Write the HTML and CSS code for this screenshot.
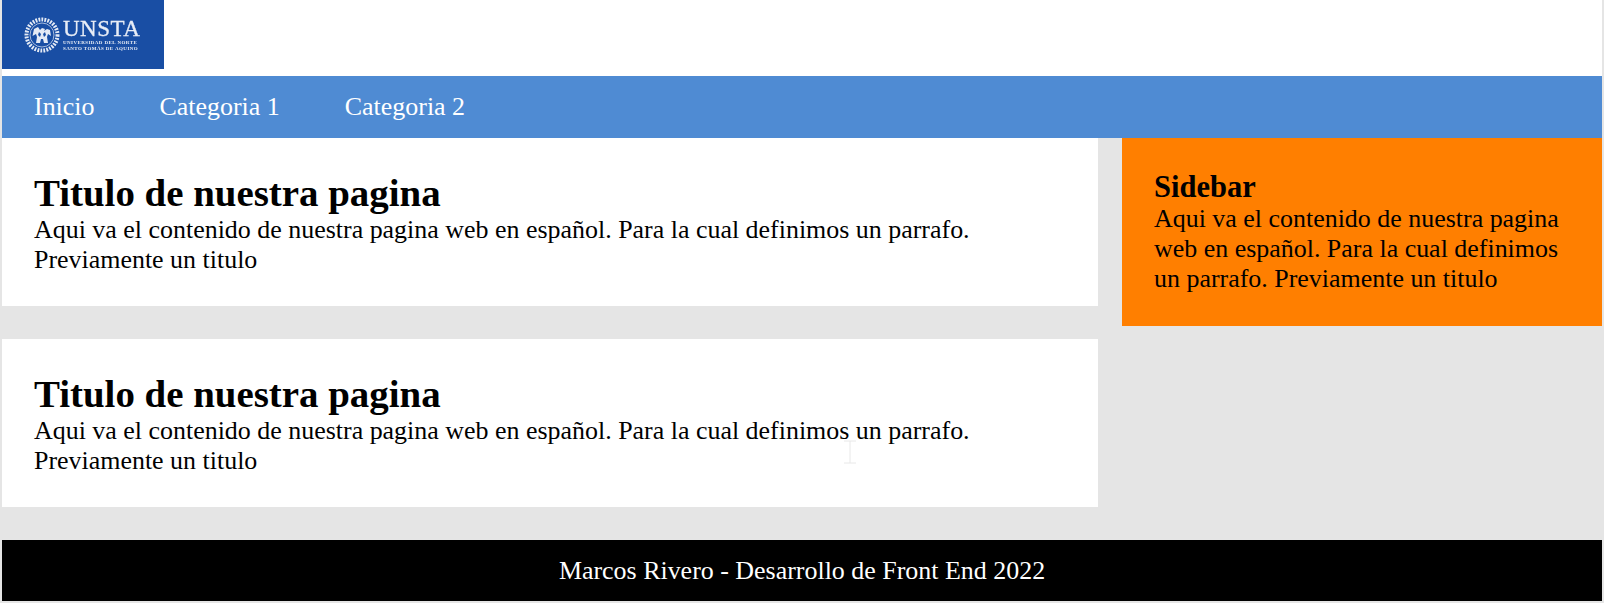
FILE: index.html
```html
<!DOCTYPE html>
<html lang="en">
<head>
    <meta charset="UTF-8">
    <title>UNSTA</title>
    <link rel="stylesheet" href="styles.css">
</head>
<body>

<header class="top">
    <div class="logo">
        <svg class="seal" width="36" height="36" viewBox="0 0 36 36">
            <circle cx="18" cy="18" r="15.5" fill="none" stroke="#e4eaf5" stroke-width="4" stroke-dasharray="1.8 1.2"/>
            <circle cx="18" cy="18" r="12" fill="none" stroke="#e4eaf5" stroke-width="0.7"/>
            <path d="M8.5 19 L10 12 L14 10 L16 13 L18 11 L21 12 L20 14 L23 12 L26 13 L27 19 L24 17 L23 20 L24 26 L20 26 L19 22 L17 22 L16 26 L12 26 L13 20 L12 17 Z" fill="#e4eaf5"/>
            <path d="M15 15 L17 17 L16 20 L14 18 Z M21 15 L19 17 L20 20 L22 18 Z" fill="#194ea4"/>
        </svg>
        <div class="logo-text">
            <div class="logo-name">UNSTA</div>
            <div class="logo-sub">UNIVERSIDAD DEL NORTE</div>
            <div class="logo-sub">SANTO TOMÁS DE AQUINO</div>
        </div>
    </div>
</header>

<nav class="menu">
    <a href="#">Inicio</a>
    <a href="#">Categoria 1</a>
    <a href="#">Categoria 2</a>
</nav>

<div class="layout">
    <main class="content">
        <section class="card">
            <h1>Titulo de nuestra pagina</h1>
            <p>Aqui va el contenido de nuestra pagina web en español. Para la cual definimos un parrafo. Previamente un titulo</p>
        </section>
        <section class="card">
            <h1>Titulo de nuestra pagina</h1>
            <p>Aqui va el contenido de nuestra pagina web en español. Para la cual definimos un parrafo. Previamente un titulo</p>
        </section>
    </main>
    <aside class="sidebar">
        <h2>Sidebar</h2>
        <p>Aqui va el contenido de nuestra pagina web en español. Para la cual definimos un parrafo. Previamente un titulo</p>
    </aside>
</div>

<footer class="foot">Marcos Rivero - Desarrollo de Front End 2022</footer>

<!-- text cursor caught in the capture -->
<svg class="cursor" width="14" height="24" viewBox="0 0 14 24">
    <path d="M1 1H13M7 1V23M1 23H13" fill="none" stroke="#e8e8e8" stroke-width="1"/>
</svg>

</body>
</html>
```

FILE: styles.css
```css
body {
    font-family: "Liberation Serif", serif;
    font-size: 25.94px;
    margin: 0 2px 2px;
    background-color: #e5e5e5;
    color: #000;
}
.top {
    background-color: #fff;
    height: 76px;
}
.logo {
    width: 162px;
    height: 69px;
    background-color: #194ea4;
    display: flex;
    align-items: center;
    padding-left: 22px;
    box-sizing: border-box;
    gap: 3px;
    color: #e8edf6;
}
.seal, .logo-text {
    filter: blur(0.4px);
}
.logo-name {
    font-size: 23px;
    line-height: 21px;
    -webkit-text-stroke: 0.3px #e8edf6;
    letter-spacing: 0.5px;
    margin-bottom: 1px;
}
.logo-sub {
    font-size: 5px;
    line-height: 6px;
    font-weight: bold;
    letter-spacing: 0.42px;
    white-space: nowrap;
}
.menu {
    background-color: #4f8bd3;
    display: flex;
    gap: 65px;
    padding: 16px 32px;
}
.menu a {
    color: #fff;
    text-decoration: none;
}
.layout {
    display: flex;
    justify-content: space-between;
    align-items: flex-start;
}
.content {
    width: 1096px;
}
.card {
    background-color: #fff;
    padding: 32px 32px 31px;
    margin-bottom: 33px;
}
h1 {
    font-size: 38.9px;
    line-height: 45px;
    margin: 0;
}
h2 {
    font-size: 30.5px;
    line-height: 34px;
    margin: 0;
}
p {
    margin: 0;
}
.sidebar {
    width: 480px;
    box-sizing: border-box;
    background-color: #ff7f00;
    padding: 32px;
}
.foot {
    background-color: #000;
    color: #fff;
    text-align: center;
    padding: 16px 16px 15px;
    line-height: 30px;
}
.cursor {
    position: absolute;
    left: 843px;
    top: 440px;
}
```
